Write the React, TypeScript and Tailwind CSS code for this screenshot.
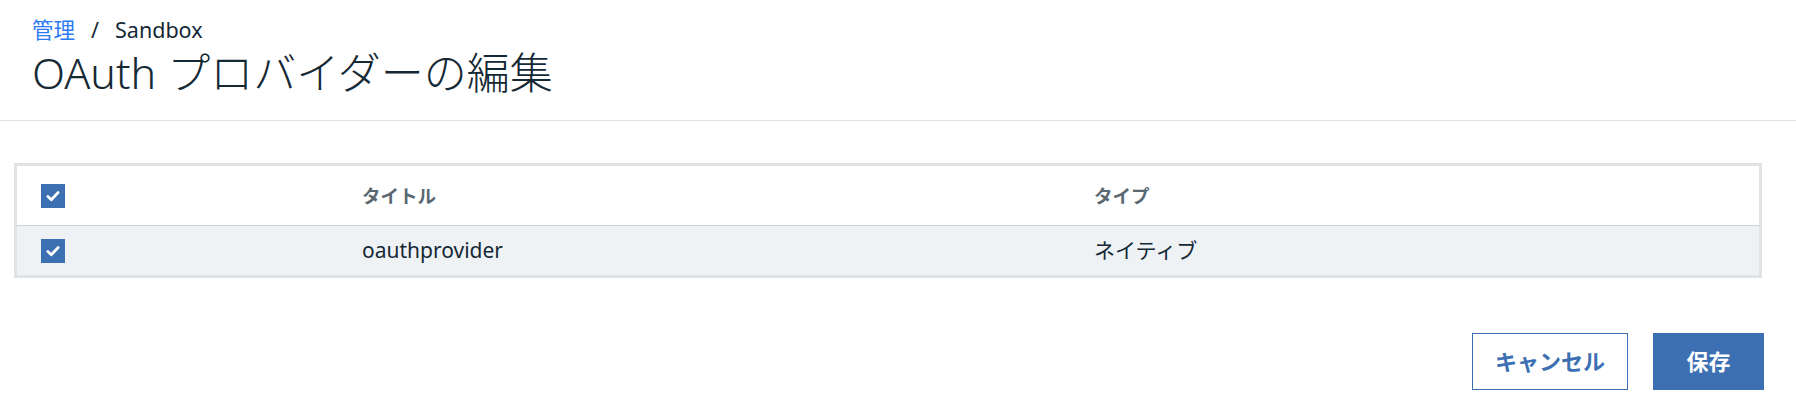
import React, { useState } from 'react';

const font = { fontFamily: '"Noto Sans", "Noto Sans CJK JP", sans-serif' };

function Checkbox({ checked, onChange }: { checked: boolean; onChange: () => void }) {
  return (
    <button
      type="button"
      onClick={onChange}
      className={`w-[24px] h-[24px] flex items-center justify-center ${checked ? 'bg-[#3d70b2]' : 'bg-white border-2 border-[#5a6872]'}`}
    >
      {checked && (
        <svg viewBox="0 0 16 16" className="w-[18px] h-[18px]" fill="none">
          <path d="M3.4 8.4 L6.5 11.3 L12.6 4.9" stroke="white" strokeWidth="2.4" strokeLinecap="round" strokeLinejoin="round" />
        </svg>
      )}
    </button>
  );
}

export default function App() {
  const [allChecked, setAllChecked] = useState(true);
  const [rowChecked, setRowChecked] = useState(true);

  return (
    <div className="w-[1796px] h-[420px] bg-white text-[#152935]" style={font}>
      <div className="border-b border-[#e0e0e0] pl-[32px] pt-[16px] pb-[18px]">
        <div className="flex items-center text-[21.5px] leading-[28px]">
          <a href="#" className="text-[#2c7bf2]">管理</a>
          <span className="mx-[16px]">/</span>
          <span>Sandbox</span>
        </div>
        <h1 className="text-[43px] leading-[58px] font-light">OAuth プロバイダーの編集</h1>
      </div>

      <div className="ml-[14px] mr-[34px] mt-[42px] border-[3px] border-[#dfe3e6]">
        <div className="grid grid-cols-[345px_732px_1fr] items-center h-[60px] border-b border-[#cdd1d4] bg-white">
          <div className="pl-[24px] flex">
            <Checkbox checked={allChecked} onChange={() => setAllChecked(!allChecked)} />
          </div>
          <div className="text-[18.5px] font-semibold text-[#5a6872]">タイトル</div>
          <div className="text-[18.5px] font-semibold text-[#5a6872]">タイプ</div>
        </div>
        <div className="grid grid-cols-[345px_732px_1fr] items-center h-[49px] bg-[#eef2f5]">
          <div className="pl-[24px] flex">
            <Checkbox checked={rowChecked} onChange={() => setRowChecked(!rowChecked)} />
          </div>
          <div className="text-[21px]">oauthprovider</div>
          <div className="text-[21px]">ネイティブ</div>
        </div>
      </div>

      <div className="flex justify-end gap-[25px] mr-[32px] mt-[55px]">
        <button className="w-[156px] h-[57px] border border-[#3d70b2] text-[#3d70b2] text-[22px] font-semibold bg-white">
          キャンセル
        </button>
        <button className="w-[111px] h-[57px] bg-[#3d70b2] text-white text-[22px] font-semibold">
          保存
        </button>
      </div>
    </div>
  );
}
